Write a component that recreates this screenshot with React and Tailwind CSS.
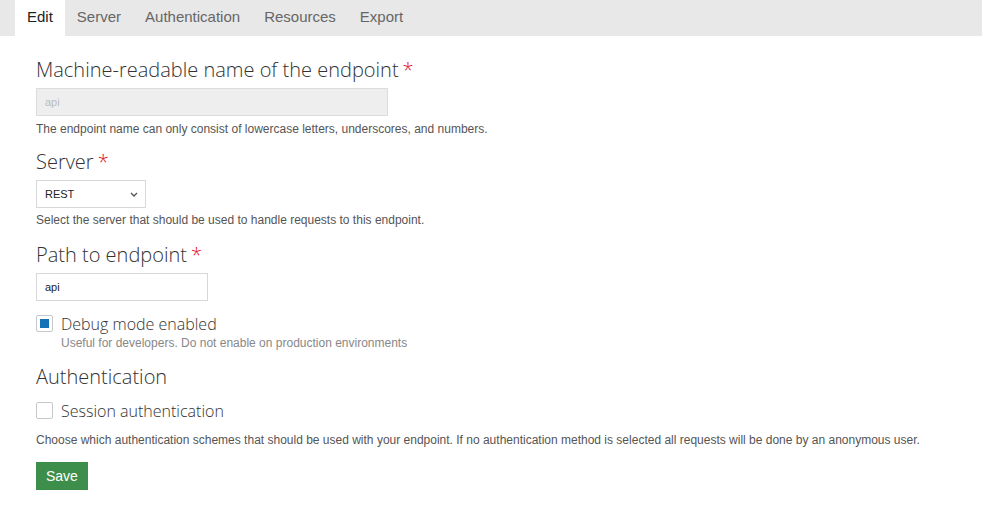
import React, { useState } from 'react';

const tabs = ['Edit', 'Server', 'Authentication', 'Resources', 'Export'];

const Required = () => <span className="text-[#e0102a] ml-1">*</span>;

const Heading = ({ children, required }) => (
    <h2 className="text-[20px] leading-[26px] font-light text-[#333] font-['Open_Sans',sans-serif] mb-[5px]">
        {children}
        {required && <Required />}
    </h2>
);

const Help = ({ children, className = '' }) => (
    <p className={`text-[12px] leading-[16px] text-[#555] ${className}`}>{children}</p>
);

const Checkbox = ({ checked, onChange, label, help }) => (
    <div className="flex items-start">
        <button
            type="button"
            onClick={onChange}
            className="mt-[1px] w-[17px] h-[17px] border border-[#c8c8c8] rounded-[2px] bg-white flex items-center justify-center shrink-0"
        >
            {checked && <span className="block w-[9px] h-[9px] bg-[#1473b8]" />}
        </button>
        <div className="ml-[8px]">
            <div className="text-[16px] leading-[20px] font-light text-[#333] font-['Open_Sans',sans-serif]">{label}</div>
            {help && <div className="text-[12px] leading-[15px] text-[#888] mt-[2px]">{help}</div>}
        </div>
    </div>
);

export default function App() {
    const [active, setActive] = useState('Edit');
    const [debug, setDebug] = useState(true);
    const [session, setSession] = useState(false);

    return (
        <div className="w-[982px] h-[518px] bg-white font-['Liberation_Sans',Arial,sans-serif] overflow-hidden">
            {/* Tabs */}
            <div className="h-[36px] bg-[#e8e8e8] flex pl-[15px]">
                {tabs.map(tab => (
                    <button
                        key={tab}
                        onClick={() => setActive(tab)}
                        className={`px-[12px] h-[36px] pb-[2px] text-[15px] leading-[20px] ${active === tab ? 'bg-white text-[#222]' : 'text-[#666]'}`}
                    >
                        {tab}
                    </button>
                ))}
            </div>

            <form className="px-[36px] pt-[21px]" onSubmit={e => e.preventDefault()}>
                <Heading required>Machine-readable name of the endpoint</Heading>
                <input
                    type="text"
                    disabled
                    value="api"
                    className="block w-[352px] h-[28px] px-[8px] bg-[#eeeeee] border border-[#dcdcdc] text-[11px] text-[#bbb]"
                />
                <Help className="mt-[5px]">The endpoint name can only consist of lowercase letters, underscores, and numbers.</Help>

                <div className="mt-[12px]">
                    <Heading required>Server</Heading>
                    <div className="relative w-[110px]">
                        <select className="appearance-none block w-[110px] h-[28px] px-[8px] bg-white border border-[#d8d8d8] text-[11px] text-[#222] outline-none">
                            <option>REST</option>
                        </select>
                        <svg className="absolute right-[8px] top-[12px] pointer-events-none" width="8" height="5" viewBox="0 0 8 5">
                            <path d="M1 1l3 3 3-3" fill="none" stroke="#555" strokeWidth="1.4" />
                        </svg>
                    </div>
                    <Help className="mt-[4px]">Select the server that should be used to handle requests to this endpoint.</Help>
                </div>

                <div className="mt-[14px]">
                    <Heading required>Path to endpoint</Heading>
                    <input
                        type="text"
                        defaultValue="api"
                        className="block w-[172px] h-[28px] px-[8px] bg-white border border-[#d8d8d8] text-[11px] text-[#222] outline-none"
                    />
                </div>

                <div className="mt-[13px]">
                    <Checkbox
                        checked={debug}
                        onChange={() => setDebug(!debug)}
                        label="Debug mode enabled"
                        help="Useful for developers. Do not enable on production environments"
                    />
                </div>

                <div className="mt-[13px]">
                    <Heading>Authentication</Heading>
                    <div className="mt-[11px]">
                        <Checkbox
                            checked={session}
                            onChange={() => setSession(!session)}
                            label="Session authentication"
                        />
                    </div>
                    <Help className="mt-[11px]">Choose which authentication schemes that should be used with your endpoint. If no authentication method is selected all requests will be done by an anonymous user.</Help>
                </div>

                <button
                    type="submit"
                    className="mt-[14px] h-[28px] px-[10px] bg-[#3e8e4b] text-white text-[14px] leading-[28px]"
                >
                    Save
                </button>
            </form>
        </div>
    );
}
